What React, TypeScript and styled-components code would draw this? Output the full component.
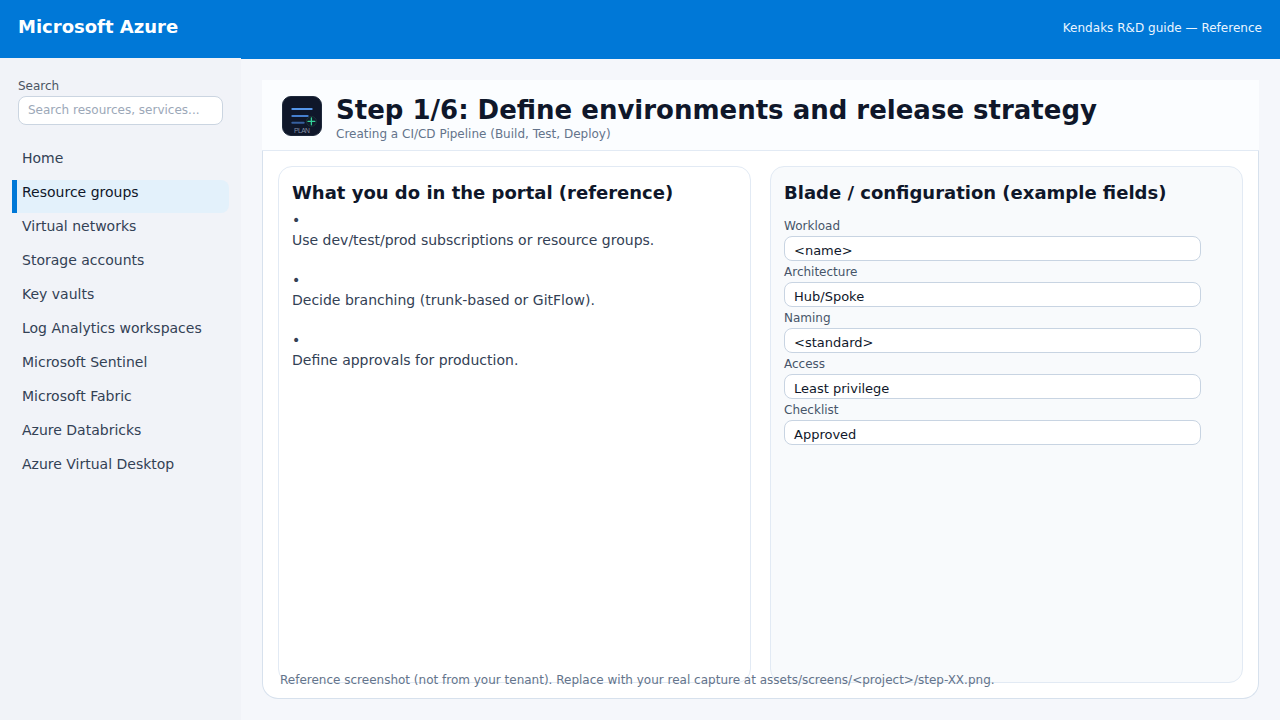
import React from "react";
import styled, { createGlobalStyle } from "styled-components";

const GlobalStyle = createGlobalStyle`
  * { box-sizing: border-box; }
  body { margin: 0; background: #f5f7fb; font-family: "DejaVu Sans", sans-serif; overflow: hidden; }
  h1, h2, p, ul { margin: 0; padding: 0; }
  ul { list-style: none; }
`;

const Page = styled.div`
  width: 1280px;
  height: 720px;
  display: flex;
  flex-direction: column;
`;

const TopBar = styled.header`
  flex: 0 0 59px;
  padding: 16px 18px 0;
  display: flex;
  justify-content: space-between;
  background: #0078d7;
  color: #ffffff;
`;

const Brand = styled.div`
  font-size: 18px;
  font-weight: 700;
  line-height: 21px;
`;

const GuideName = styled.div`
  padding-top: 5px;
  font-size: 12px;
  line-height: 14px;
  letter-spacing: 0.02px;
  color: #ebf5ff;
`;

const Body = styled.div`
  flex: 1;
  min-height: 0;
  display: flex;
`;

const Sidebar = styled.aside`
  flex: 0 0 241px;
  margin-top: -1px;
  padding: 21px 12px 0;
  background: #f1f3f8;
`;

const SearchArea = styled.div`
  padding: 0 6px;
`;

const FieldLabel = styled.div<{ $color?: string }>`
  font-size: 12px;
  line-height: 14px;
  color: ${(p) => p.$color ?? "#475569"};
`;

const SearchBox = styled.div`
  width: 205px;
  height: 29px;
  margin-top: 3px;
  padding: 6px 9px 0;
  border: 1px solid #cbd5e1;
  border-radius: 8px;
  background: #ffffff;
  color: #9ca8b8;
  font-size: 12px;
  line-height: 14px;
`;

const Nav = styled.nav`
  width: 217px;
  margin-top: 21px;
  display: flex;
  flex-direction: column;
  gap: 1px;
`;

const NavItem = styled.div<{ $active?: boolean }>`
  height: 33px;
  padding: 4px 0 0 ${(p) => (p.$active ? 5 : 10)}px;
  border-left: ${(p) => (p.$active ? "5px solid #0078d7" : "0")};
  border-radius: 0 8px 8px 0;
  background: ${(p) => (p.$active ? "#e3f1fb" : "transparent")};
  color: ${(p) => (p.$active ? "#0f172a" : "#334155")};
  font-size: 14px;
  line-height: 16px;
`;

const Main = styled.main`
  padding: 21px 21px 0;
`;

const Card = styled.section`
  width: 997px;
  height: 619px;
  display: flex;
  flex-direction: column;
  border: solid #d7e1ed;
  border-width: 0 1px 1px;
  border-radius: 0 0 16px 16px;
  background: #ffffff;
`;

const CardHeader = styled.div`
  flex: 0 0 71px;
  margin: 0 -1px;
  padding: 15px 20px 0;
  display: flex;
  gap: 14px;
  border-bottom: 1px solid #e2eaf4;
  background: #fbfdff;
`;

const PlanIcon = styled.svg`
  width: 40px;
  height: 40px;
  margin-top: 1px;
`;

const Title = styled.h1`
  font-size: 26px;
  line-height: 30px;
  color: #0f172a;
  white-space: nowrap;
`;

const Subtitle = styled.p`
  margin-top: 2px;
  font-size: 12px;
  line-height: 14px;
  color: #64748b;
`;

const Panels = styled.div`
  display: flex;
  gap: 19px;
  padding: 15px 15px 0;
`;

const Panel = styled.section<{ $tinted?: boolean }>`
  width: 473px;
  height: 517px;
  padding: 15px 13px 0;
  border: 1px solid #e2eaf4;
  border-radius: 14px;
  background: ${(p) => (p.$tinted ? "#f8fafc" : "#ffffff")};
`;

const PanelTitle = styled.h2`
  font-size: 18px;
  line-height: 21px;
  color: #0f172a;
  white-space: nowrap;
`;

const Steps = styled.ul`
  margin-top: 7px;
`;

const Step = styled.li`
  height: 60px;
  font-size: 14px;
  line-height: 20px;
  color: #334155;
`;

const Fields = styled.div`
  margin-top: 16px;
`;

const Field = styled.div`
  height: 46px;
`;

const FieldValue = styled.div`
  width: 417px;
  height: 25px;
  margin-top: 3px;
  padding: 6px 9px 0;
  border: 1px solid #c8d4e2;
  border-radius: 8px;
  background: #ffffff;
  color: #0f172a;
  font-size: 13px;
  line-height: 15px;
`;

const Footnote = styled.p`
  position: relative;
  margin: -10px 0 0 17px;
  font-size: 12px;
  line-height: 14px;
  color: #64748b;
  white-space: nowrap;
`;

const navItems = [
  "Home",
  "Resource groups",
  "Virtual networks",
  "Storage accounts",
  "Key vaults",
  "Log Analytics workspaces",
  "Microsoft Sentinel",
  "Microsoft Fabric",
  "Azure Databricks",
  "Azure Virtual Desktop",
];

const steps = [
  "Use dev/test/prod subscriptions or resource groups.",
  "Decide branching (trunk-based or GitFlow).",
  "Define approvals for production.",
];

const fields = [
  ["Workload", "<name>"],
  ["Architecture", "Hub/Spoke"],
  ["Naming", "<standard>"],
  ["Access", "Least privilege"],
  ["Checklist", "Approved"],
];

export default function App() {
  return (
    <Page>
      <GlobalStyle />
      <TopBar>
        <Brand>Microsoft Azure</Brand>
        <GuideName>Kendaks R&amp;D guide — Reference</GuideName>
      </TopBar>
      <Body>
        <Sidebar>
          <SearchArea>
            <FieldLabel $color="#4b5563">Search</FieldLabel>
            <SearchBox>Search resources, services...</SearchBox>
          </SearchArea>
          <Nav>
            {navItems.map((item) => (
              <NavItem key={item} $active={item === "Resource groups"}>
                {item}
              </NavItem>
            ))}
          </Nav>
        </Sidebar>
        <Main>
          <Card>
            <CardHeader>
              <PlanIcon viewBox="0 0 40 40">
                <rect x="0.5" y="0.5" width="39" height="39" rx="8.5" fill="#0f172a" stroke="#1e293b" />
                <g strokeWidth="2" strokeLinecap="round">
                  <path d="M10.3 13h19.4" stroke="#5596ea" />
                  <path d="M10.3 19.9h15.4" stroke="#457fcf" />
                  <path d="M10.3 26.8h11.4" stroke="#365f9e" />
                </g>
                <circle cx="29.4" cy="25.4" r="5" fill="#101c2b" stroke="#1d3238" />
                <path d="M29.4 22v6.8M26 25.4h6.8" stroke="#34d399" strokeWidth="1.3" strokeLinecap="round" />
                <text x="20" y="36.9" textAnchor="middle" fontSize="6.8" textLength="16" fontFamily="Liberation Sans, sans-serif" fill="#8490a3">
                  PLAN
                </text>
              </PlanIcon>
              <div>
                <Title>Step 1/6: Define environments and release strategy</Title>
                <Subtitle>Creating a CI/CD Pipeline (Build, Test, Deploy)</Subtitle>
              </div>
            </CardHeader>
            <Panels>
              <Panel>
                <PanelTitle>What you do in the portal (reference)</PanelTitle>
                <Steps>
                  {steps.map((step) => (
                    <Step key={step}>
                      •<br />
                      {step}
                    </Step>
                  ))}
                </Steps>
              </Panel>
              <Panel $tinted>
                <PanelTitle>Blade / configuration (example fields)</PanelTitle>
                <Fields>
                  {fields.map(([label, value]) => (
                    <Field key={label}>
                      <FieldLabel>{label}</FieldLabel>
                      <FieldValue>{value}</FieldValue>
                    </Field>
                  ))}
                </Fields>
              </Panel>
            </Panels>
            <Footnote>
              Reference screenshot (not from your tenant). Replace with your real capture at
              assets/screens/&lt;project&gt;/step-XX.png.
            </Footnote>
          </Card>
        </Main>
      </Body>
    </Page>
  );
}
